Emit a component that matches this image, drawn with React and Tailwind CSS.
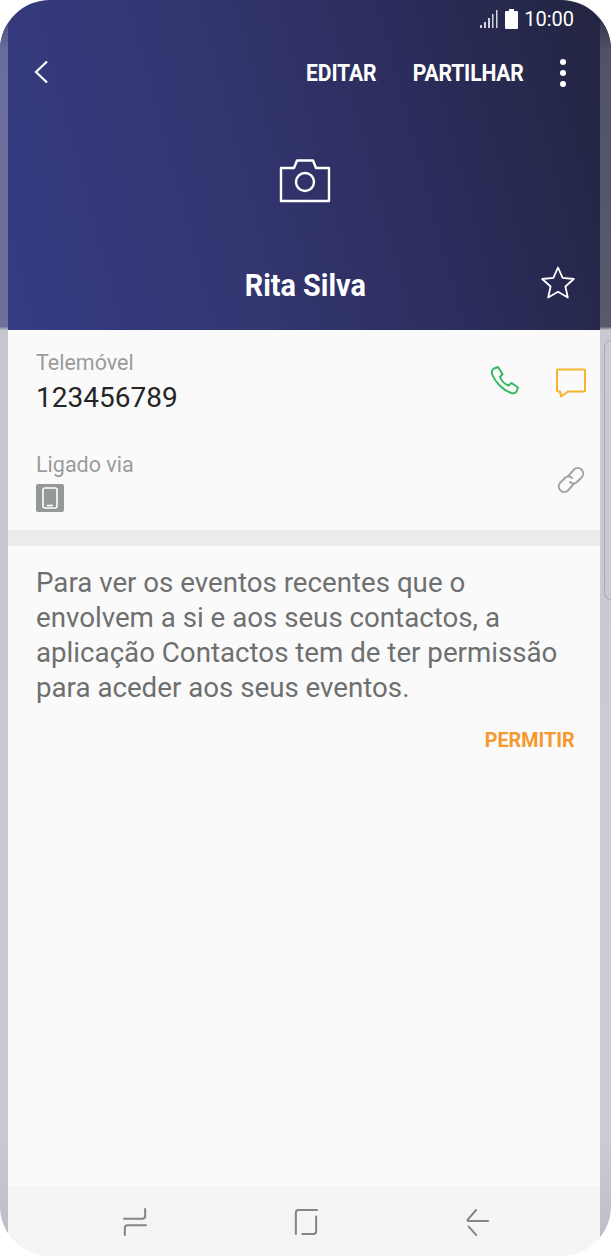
const Dots = () => (
  <div className="flex flex-col gap-[5px] ml-[36px] mr-[45px]">
    <span className="w-[6px] h-[6px] rounded-full bg-white" />
    <span className="w-[6px] h-[6px] rounded-full bg-white" />
    <span className="w-[6px] h-[6px] rounded-full bg-white" />
  </div>
);

const StatusIcons = () => (
  <>
    <svg width="19" height="20" viewBox="0 0 19 20" fill="#fff" className="opacity-80">
      <rect x="0" y="16" width="2" height="3" />
      <rect x="4" y="13" width="2" height="6" />
      <rect x="8" y="9" width="2" height="10" />
      <rect x="12" y="5" width="1.5" height="14" />
      <rect x="16" y="1" width="1.5" height="18" />
    </svg>
    <svg width="13" height="20" viewBox="0 0 13 20" fill="#fff" className="ml-[6px]">
      <path d="M4 0h5v2h3a1 1 0 0 1 1 1v16a1 1 0 0 1-1 1H1a1 1 0 0 1-1-1V3a1 1 0 0 1 1-1h3z" />
    </svg>
  </>
);

const App = () => {
  return (
    <div className="relative w-[611px] h-[1256px] rounded-[50px] overflow-hidden bg-[#fafafa] flex flex-col font-['Roboto',sans-serif]">
      {/* Header */}
      <div className="h-[330px] flex flex-col bg-[linear-gradient(75deg,#363c84_0%,#333670_38%,#2b2d5c_68%,#22243f_100%)] text-white">
        <div className="h-[38px] flex items-center justify-end pr-[37px] pb-[1px]">
          <StatusIcons />
          <span className="ml-[6px] text-[20px] leading-none">10:00</span>
        </div>
        <div className="h-[70px] flex items-center">
          <svg width="16" height="24" viewBox="0 0 16 24" fill="none" stroke="#fff" strokeWidth="2.2" className="ml-[33px] -mt-[3px]">
            <path d="M14 1.5 3 12l11 10.5" />
          </svg>
          <div className="ml-auto flex items-center">
            <span className="text-[23px] font-bold leading-none scale-x-[0.92] origin-right tracking-[-0.2px]">EDITAR</span>
            <span className="ml-[27px] text-[23px] font-bold leading-none scale-x-[0.92] origin-right tracking-[-0.2px]">PARTILHAR</span>
            <Dots />
          </div>
        </div>
        <div className="flex justify-center mt-[49px] pr-[2px]">
          <svg width="52" height="46" viewBox="0 0 52 46" fill="none" stroke="#fff" strokeWidth="2.4" strokeLinejoin="round">
            <path d="M2 11h13l3-7.5h16l3 7.5h13v33H2z" />
            <circle cx="26" cy="25" r="9" />
          </svg>
        </div>
        <div className="relative flex justify-center mt-[63px]">
          <span className="text-[32px] font-bold leading-[38px] scale-x-[0.9]">Rita Silva</span>
          <svg width="36" height="36" viewBox="0 0 36 36" fill="none" stroke="#fff" strokeWidth="1.8" strokeLinejoin="round" className="absolute right-[35px] -top-[1px]">
            <path d="M18 2.5l4.6 10.4 11.2 1.1-8.4 7.5 2.4 11-9.8-5.7-9.8 5.7 2.4-11L2.2 14l11.2-1.1z" />
          </svg>
        </div>
      </div>

      {/* Contact details */}
      <div className="flex-1 flex flex-col">
        <div className="flex pl-[36px] pr-[26px] pt-[21px]">
          <div className="flex flex-col">
            <span className="text-[21.5px] leading-[24px] text-[#9b9b9b]">Telemóvel</span>
            <span className="mt-[6px] text-[28px] leading-[34px] text-[#252525]">123456789</span>
          </div>
          <div className="ml-auto flex items-start gap-[35px] pt-[15px]">
            <svg width="30" height="30" viewBox="0 0 30 30" fill="none" stroke="#35b860" strokeWidth="2" strokeLinejoin="round">
              <path d="M4 2.5 8 1l4.500 7-2.500 3c1 3 4.500 7 8.500 8.500l3-2.500 6.500 4.500-1.500 4c-1 1.500-3 2-5 1.500C13 24.500 5 16 2 8c-.5-2 .5-4.500 2-5.500z" />
            </svg>
            <svg width="30" height="30" viewBox="0 0 30 30" fill="none" stroke="#f7b32b" strokeWidth="2" strokeLinejoin="round" className="mt-[2px] ml-[1px] -mr-[1px]">
              <path d="M2 1.500h26a1 1 0 0 1 1 1v20a1 1 0 0 1-1 1H12l-7 5-1-5H2a1 1 0 0 1-1-1v-20a1 1 0 0 1 1-1z" />
            </svg>
          </div>
        </div>
        <div className="flex pl-[36px] pr-[26px] pt-[38px]">
          <div className="flex flex-col">
            <span className="text-[21.5px] leading-[24px] text-[#9b9b9b]">Ligado via</span>
            <div className="mt-[7px] w-[28px] h-[28px] rounded-[2px] bg-[#949899] flex items-center justify-center">
              <svg width="16" height="22" viewBox="0 0 16 22" fill="none" stroke="#fff" strokeWidth="1.6">
                <rect x="1" y="1" width="14" height="20" rx="2" />
                <path d="M5 18.500h6" />
              </svg>
            </div>
          </div>
          <svg width="28" height="28" viewBox="0 0 28 28" fill="none" stroke="#a3a3a3" strokeWidth="2" strokeLinecap="round" className="ml-auto mt-[13px]">
            <path d="M11 10.500 17 3.500a5.500 5.500 0 0 1 8 7.500l-5 5a5 5 0 0 1-7 0" />
            <path d="M17 17.500l-6 7a5.500 5.500 0 0 1-8-7.500l5-5a5 5 0 0 1 7 0" />
          </svg>
        </div>
        <div className="h-[16px] mt-[18px] bg-[#ececec]" />
        <p className="pl-[36px] pr-[40px] pt-[19px] text-[27.7px] leading-[35px] text-[#6e7070]">
          Para ver os eventos recentes que o envolvem a si e aos seus contactos, a aplicação Contactos tem de ter permissão para aceder aos seus eventos.
        </p>
        <div className="flex justify-end pr-[36px] pt-[22px]">
          <span className="text-[21px] font-bold leading-[26px] text-[#f7982d] scale-x-[0.94] origin-right">PERMITIR</span>
        </div>
      </div>

      {/* Navigation bar */}
      <div className="h-[70px] bg-[#f5f5f5] flex items-start justify-center gap-[147px] pl-[1px] pt-[22px]">
        <svg width="24" height="28" viewBox="0 0 26 30" fill="none" stroke="#858585" strokeWidth="2.2" strokeLinecap="round">
          <path d="M1 11.500h20a3 3 0 0 0 3-3V1" />
          <path d="M25 18.500H5a3 3 0 0 0-3 3V29" />
        </svg>
        <svg width="24" height="28" viewBox="0 0 26 30" fill="none" stroke="#858585" strokeWidth="2.2" strokeLinecap="round">
          <path d="M25 2H5a3 3 0 0 0-3 3v23" />
          <path d="M24 9v16a3 3 0 0 1-3 3H9" />
        </svg>
        <svg width="24" height="28" viewBox="0 0 26 30" fill="none" stroke="#858585" strokeWidth="2.2" strokeLinecap="round">
          <path d="M25 14H4q-2 0-1-1.500L12 2" />
          <path d="M4 20l8 9" />
        </svg>
      </div>

      {/* Curved display edges */}
      <div className="absolute left-0 top-0 bottom-0 w-[8px] bg-[linear-gradient(180deg,#34386a_0%,#6a6f9a_4%,#6d7098_26%,#c6c7d1_26.300%,#c9cad4_90%,#babbc6_100%)]" />
      <div className="absolute right-0 top-0 bottom-0 w-[11px] bg-[linear-gradient(180deg,#1f2138_0%,#505368_4%,#585a6c_26%,#c8c9d2_26.300%,#cbccd6_90%,#babbc6_100%)]" />
      <div className="absolute right-0 top-[340px] w-[7px] h-[260px] rounded-l-[8px] border-l border-y border-[#a9aab6] bg-[#c9cad3]" />
    </div>
  );
};

export default App;
